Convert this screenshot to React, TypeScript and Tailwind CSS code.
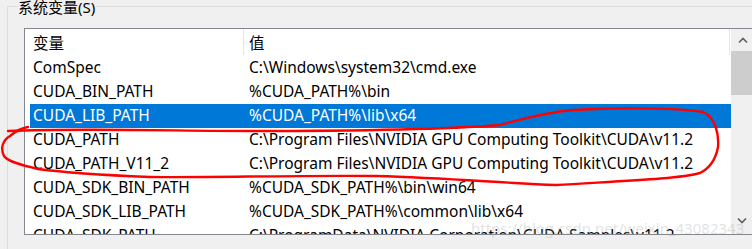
import React from "react";

const rows: [string, string][] = [
  ["ComSpec", "C:\\Windows\\system32\\cmd.exe"],
  ["CUDA_BIN_PATH", "%CUDA_PATH%\\bin"],
  ["CUDA_LIB_PATH", "%CUDA_PATH%\\lib\\x64"],
  ["CUDA_PATH", "C:\\Program Files\\NVIDIA GPU Computing Toolkit\\CUDA\\v11.2"],
  ["CUDA_PATH_V11_2", "C:\\Program Files\\NVIDIA GPU Computing Toolkit\\CUDA\\v11.2"],
  ["CUDA_SDK_BIN_PATH", "%CUDA_SDK_PATH%\\bin\\win64"],
  ["CUDA_SDK_LIB_PATH", "%CUDA_SDK_PATH%\\common\\lib\\x64"],
  ["CUDA_SDK_PATH", "C:\\ProgramData\\NVIDIA Corporation\\CUDA Samples\\v11.2"],
];

export default function App() {
  return (
    <div className="relative w-[752px] h-[249px] overflow-hidden bg-[#f0f0f0] pt-[6px] pl-[7px] font-['Noto_Sans','Noto_Sans_CJK_SC',sans-serif] text-[15.5px] text-black">
      <div className="relative h-[260px] w-[800px] border-l border-t border-[#dcdcdc] pt-[21px] pl-[16px]">
        <div className="absolute left-[9px] top-[-8px] bg-[#f0f0f0] px-[1px] text-[15px] leading-[16px] whitespace-nowrap">
          系统变量(S)
        </div>
        <div className="flex h-[207px] w-[740px] overflow-hidden border border-[#828790] bg-white">
          <div className="flex w-[706px] shrink-0 flex-col pl-[5px]">
            <div className="flex h-[27px] shrink-0 items-center">
              <div className="w-[213px] pl-[3px] leading-[20px]">变量</div>
              <div className="h-[26px] w-px self-start bg-[#e5e5e5]" />
              <div className="flex-1 pl-[5px] leading-[20px]">值</div>
              <div className="h-[26px] w-px self-start bg-[#e5e5e5] mr-px" />
            </div>
            {rows.map(([k, v], i) => {
              const sel = i === 2;
              return (
                <div
                  key={k}
                  className={
                    "flex h-[24px] shrink-0 items-center whitespace-nowrap " +
                    (sel ? "bg-[#0078d7] text-white" : "")
                  }
                >
                  <div className="w-[216px] pl-[3px]">{k}</div>
                  <div className="pl-[3px]">{v}</div>
                </div>
              );
            })}
          </div>
          <div className="flex w-[21px] shrink-0 flex-col bg-[#f0f0f0]">
            <div className="flex h-[22px] items-center justify-center pl-[2px]">
              <svg width="10" height="6" viewBox="0 0 10 6">
                <path d="M1 5.5 L5 1.5 L9 5.5" fill="none" stroke="#606060" strokeWidth="1.6" />
              </svg>
            </div>
            <div className="h-[44px] bg-[#cdcdcd]" />
            <div className="flex-1" />
            <div className="flex h-[20px] items-start justify-center pl-[1px] pt-[4px]">
              <svg width="10" height="6" viewBox="0 0 10 6">
                <path d="M1 0.5 L5 4.5 L9 0.5" fill="none" stroke="#606060" strokeWidth="1.6" />
              </svg>
            </div>
          </div>
        </div>
      </div>
      <div className="pointer-events-none absolute left-[471px] top-[218px] text-[15px] leading-[20px] text-[rgba(170,170,170,0.35)] whitespace-nowrap">
        https://blog.csdn.net/weixin_43082343
      </div>
      <svg className="pointer-events-none absolute left-0 top-0" width="752" height="249" viewBox="0 0 752 249">
        <path
          d="M 8 131 C 80 128, 180 131, 250 131 C 350 131, 450 129, 500 125 C 520 120, 540 113, 573 110 C 620 107, 680 108, 703 112 C 716 118, 719 135, 718 147 C 716 158, 710 168, 700 173 C 680 179, 620 181, 556 185 C 500 183, 450 178, 376 176 C 300 175, 200 178, 150 177 C 100 175, 60 172, 38 169"
          fill="none"
          stroke="#ff0000"
          strokeWidth="2.4"
          strokeLinecap="round"
        />
        <path
          d="M 38 169 C 25 166, 8 162, 4 156 C 0 148, 3 140, 10 136 C 16 131, 22 128, 28 127"
          fill="none"
          stroke="#ff0000"
          strokeWidth="2.4"
          strokeLinecap="round"
        />
      </svg>
    </div>
  );
}
